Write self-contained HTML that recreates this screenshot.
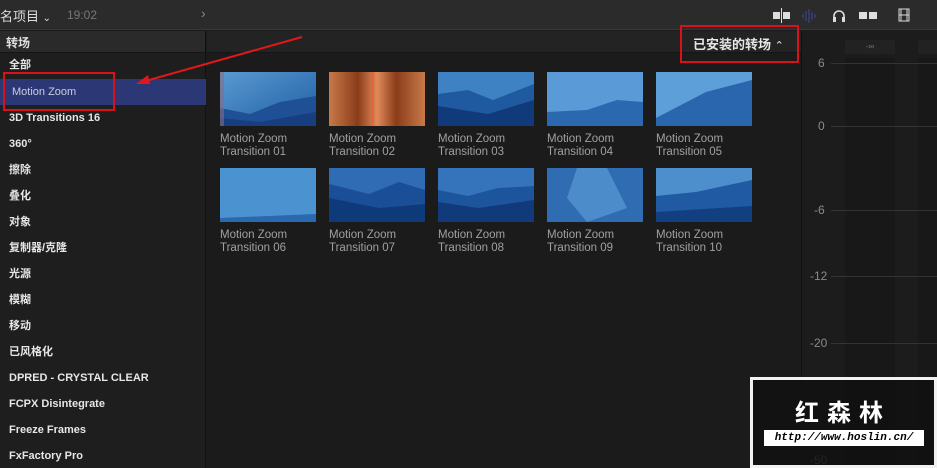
<!DOCTYPE html>
<html><head><meta charset="utf-8"><style>
*{margin:0;padding:0;box-sizing:border-box}
body{width:937px;height:468px;background:#1b1b1b;font-family:"Liberation Sans","Noto Sans CJK SC",sans-serif;position:relative;overflow:hidden;color:#ddd}
.a{position:absolute}
.top{left:0;top:0;width:937px;height:30px;background:#2b2b2b;border-bottom:1px solid #2a3470}
.side{left:0;top:31px;width:206px;height:437px;background:#1e1e1e;border-right:1px solid #111}
.hdr{height:22px;background:#2a2a2a;border-bottom:1px solid #151515}
.it{position:absolute;left:9px;font-size:11px;color:#e6e6e6;font-weight:bold;line-height:14px;height:14px}
.th{position:absolute;width:96px;height:54px}
.lb{position:absolute;font-size:11.5px;color:#a0a0a0;line-height:13px}
.ml{position:absolute;font-size:12px;color:#8a8a8a;left:818px}
</style></head><body>
<div class="a top">
<div class="a" style="left:0;top:6px;font-size:13px;color:#ddd">名项目 <span style="font-size:10px">⌄</span></div>
<div class="a" style="left:67px;top:8px;font-size:12px;color:#777">19:02</div>
<div class="a" style="left:201px;top:5px;font-size:14px;color:#888">›</div>
<svg class="a" style="left:770px;top:6px" width="150" height="20">
<rect x="3" y="6" width="7" height="7" fill="#ddd"/><rect x="13" y="6" width="7" height="7" fill="#ddd"/><line x1="11.5" y1="2" x2="11.5" y2="17" stroke="#ddd"/>
<g stroke="#3a4aa0"><line x1="33" y1="8" x2="33" y2="12"/><line x1="36" y1="5" x2="36" y2="15"/><line x1="39" y1="3" x2="39" y2="17"/><line x1="42" y1="6" x2="42" y2="14"/><line x1="45" y1="8" x2="45" y2="12"/></g>
<path d="M64 15V10a5 5 0 0 1 10 0v5" stroke="#ddd" fill="none" stroke-width="1.6"/><rect x="63" y="11" width="3" height="5" fill="#ddd"/><rect x="72" y="11" width="3" height="5" fill="#ddd"/>
<rect x="89" y="6" width="8" height="7" fill="#ddd"/><rect x="99" y="6" width="8" height="7" fill="#ddd"/>
<rect x="129" y="3" width="10" height="12" fill="none" stroke="#ddd"/><line x1="131" y1="3" x2="131" y2="15" stroke="#ddd"/><line x1="137" y1="3" x2="137" y2="15" stroke="#ddd"/><line x1="129" y1="9" x2="139" y2="9" stroke="#ddd"/>
</svg>
</div>
<div class="a side"><div class="hdr"><span style="position:absolute;left:6px;top:3px;font-size:12px;color:#ddd;font-weight:bold">转场</span></div>
<div class="a" style="left:0;top:48px;width:206px;height:26px;background:#2c3876"></div>
<div class="it" style="top:27px">全部</div>
<div class="it" style="top:54px;left:12px;font-weight:normal;color:#ccd">Motion Zoom</div>
<div class="it" style="top:80px">3D Transitions 16</div>
<div class="it" style="top:106px">360°</div>
<div class="it" style="top:132px">擦除</div>
<div class="it" style="top:158px">叠化</div>
<div class="it" style="top:184px">对象</div>
<div class="it" style="top:210px">复制器/克隆</div>
<div class="it" style="top:236px">光源</div>
<div class="it" style="top:262px">模糊</div>
<div class="it" style="top:288px">移动</div>
<div class="it" style="top:314px">已风格化</div>
<div class="it" style="top:340px">DPRED - CRYSTAL CLEAR</div>
<div class="it" style="top:366px">FCPX Disintegrate</div>
<div class="it" style="top:392px">Freeze Frames</div>
<div class="it" style="top:418px">FxFactory Pro</div>
</div>
<div class="a" style="left:207px;top:31px;width:594px;height:22px;background:#232323;border-bottom:1px solid #151515"></div>
<div class="a" style="left:693px;top:34px;font-size:13px;color:#e6e6e6;font-weight:bold">已安装的转场 <span style="font-weight:normal;font-size:11px">⌃</span></div>
<div class="a" style="left:680px;top:25px;width:119px;height:38px;border:2px solid #d8121c"></div>
<div class="a" style="left:3px;top:72px;width:112px;height:39px;border:2px solid #d8121c"></div>
<svg class="a" style="left:130px;top:30px" width="180" height="60"><line x1="172" y1="7" x2="12" y2="52" stroke="#e01818" stroke-width="2"/><polygon points="6,54 18,45 20,54" fill="#e01818"/></svg>
<svg width="0" height="0" style="position:absolute"><defs>
<linearGradient id="g1" x1="0" y1="0" x2="1" y2="1"><stop offset="0" stop-color="#5a9ad0"/><stop offset="1" stop-color="#1f5da5"/></linearGradient>
<linearGradient id="g2" x1="0" y1="0" x2="1" y2="0"><stop offset="0" stop-color="#c97a4a"/><stop offset=".3" stop-color="#8a3c1a"/><stop offset=".5" stop-color="#e08a5a"/><stop offset=".7" stop-color="#8a3c1a"/><stop offset="1" stop-color="#c97a4a"/></linearGradient>
</defs></svg>
<svg class="th" style="left:220px;top:72px" viewBox="0 0 96 54"><rect width="96" height="54" fill="url(#g1)"/><polygon points="0,36 30,42 60,30 96,24 96,54 0,54" fill="#1f4f94"/><polygon points="0,46 40,50 96,40 96,54 0,54" fill="#173f80"/><rect width="4" height="54" fill="#8a6a80" opacity=".6"/></svg>
<svg class="th" style="left:329px;top:72px" viewBox="0 0 96 54"><rect width="96" height="54" fill="url(#g2)"/><line x1="44" y1="0" x2="44" y2="54" stroke="#ff5020"/></svg>
<svg class="th" style="left:438px;top:72px" viewBox="0 0 96 54"><rect width="96" height="54" fill="#3f82c4"/><polygon points="0,22 30,18 55,28 96,12 96,54 0,54" fill="#1f5aa0"/><polygon points="0,34 50,42 96,28 96,54 0,54" fill="#103a7a"/></svg>
<svg class="th" style="left:547px;top:72px" viewBox="0 0 96 54"><rect width="96" height="54" fill="#5a9ad6"/><polygon points="0,40 40,38 70,28 96,30 96,54 0,54" fill="#2a68b0"/></svg>
<svg class="th" style="left:656px;top:72px" viewBox="0 0 96 54"><rect width="96" height="54" fill="#5d9fd8"/><polygon points="0,46 50,20 96,8 96,54 0,54" fill="#2a66ad"/></svg>
<svg class="th" style="left:220px;top:168px" viewBox="0 0 96 54"><rect width="96" height="54" fill="#4a92d0"/><polygon points="0,50 96,46 96,54 0,54" fill="#2a68b0"/></svg>
<svg class="th" style="left:329px;top:168px" viewBox="0 0 96 54"><rect width="96" height="54" fill="#2f6cb4"/><polygon points="0,16 40,26 70,14 96,22 96,54 0,54" fill="#1a4f98"/><polygon points="0,30 50,40 96,36 96,54 0,54" fill="#0f3a7a"/></svg>
<svg class="th" style="left:438px;top:168px" viewBox="0 0 96 54"><rect width="96" height="54" fill="#3574bb"/><polygon points="0,22 30,28 60,20 96,18 96,54 0,54" fill="#1d559c"/><polygon points="0,34 40,40 96,32 96,54 0,54" fill="#103a7a"/></svg>
<svg class="th" style="left:547px;top:168px" viewBox="0 0 96 54"><rect width="96" height="54" fill="#2f6cb2"/><polygon points="30,0 60,0 80,40 40,54 20,30" fill="#4c8ccb"/></svg>
<svg class="th" style="left:656px;top:168px" viewBox="0 0 96 54"><rect width="96" height="54" fill="#4d8fcc"/><polygon points="0,28 40,24 96,12 96,54 0,54" fill="#1f5aa2"/><polygon points="0,44 96,38 96,54 0,54" fill="#123f80"/></svg>
<div class="lb" style="left:220px;top:133px">Motion Zoom<br>Transition 01</div>
<div class="lb" style="left:329px;top:133px">Motion Zoom<br>Transition 02</div>
<div class="lb" style="left:438px;top:133px">Motion Zoom<br>Transition 03</div>
<div class="lb" style="left:547px;top:133px">Motion Zoom<br>Transition 04</div>
<div class="lb" style="left:656px;top:133px">Motion Zoom<br>Transition 05</div>
<div class="lb" style="left:220px;top:229px">Motion Zoom<br>Transition 06</div>
<div class="lb" style="left:329px;top:229px">Motion Zoom<br>Transition 07</div>
<div class="lb" style="left:438px;top:229px">Motion Zoom<br>Transition 08</div>
<div class="lb" style="left:547px;top:229px">Motion Zoom<br>Transition 09</div>
<div class="lb" style="left:656px;top:229px">Motion Zoom<br>Transition 10</div>
<div class="a" style="left:801px;top:31px;width:136px;height:437px;background:#1c1c1c;border-left:1px solid #111"></div>
<div class="a" style="left:845px;top:40px;width:50px;height:14px;background:#222;font-size:8px;color:#777;text-align:center;line-height:14px">-∞</div>
<div class="a" style="left:918px;top:40px;width:19px;height:14px;background:#222"></div>
<div class="a" style="left:845px;top:58px;width:50px;height:410px;background:#181818"></div>
<div class="a" style="left:918px;top:58px;width:19px;height:410px;background:#181818"></div>
<div class="ml" style="top:56px">6</div><div class="ml" style="top:119px">0</div><div class="ml" style="top:203px;left:814px">-6</div><div class="ml" style="top:269px;left:810px">-12</div><div class="ml" style="top:336px;left:810px">-20</div><div class="ml" style="top:453px;left:810px">-50</div>
<div class="a" style="left:831px;top:63px;width:106px;height:1px;background:#333"></div>
<div class="a" style="left:831px;top:126px;width:106px;height:1px;background:#333"></div>
<div class="a" style="left:831px;top:210px;width:106px;height:1px;background:#333"></div>
<div class="a" style="left:831px;top:276px;width:106px;height:1px;background:#333"></div>
<div class="a" style="left:831px;top:343px;width:106px;height:1px;background:#333"></div>
<div class="a" style="left:750px;top:377px;width:187px;height:91px;background:rgba(17,17,17,.85);border:3px solid #f2f2f2"></div>
<div class="a" style="left:795px;top:393px;font-size:24px;font-weight:bold;color:#fff;letter-spacing:8px">红森林</div>
<div class="a" style="left:764px;top:430px;width:160px;height:16px;background:#fff;color:#000;font-family:'Liberation Mono',monospace;font-style:italic;font-weight:bold;font-size:11px;line-height:16px;text-align:center">http://www.hoslin.cn/</div>
</body></html>
